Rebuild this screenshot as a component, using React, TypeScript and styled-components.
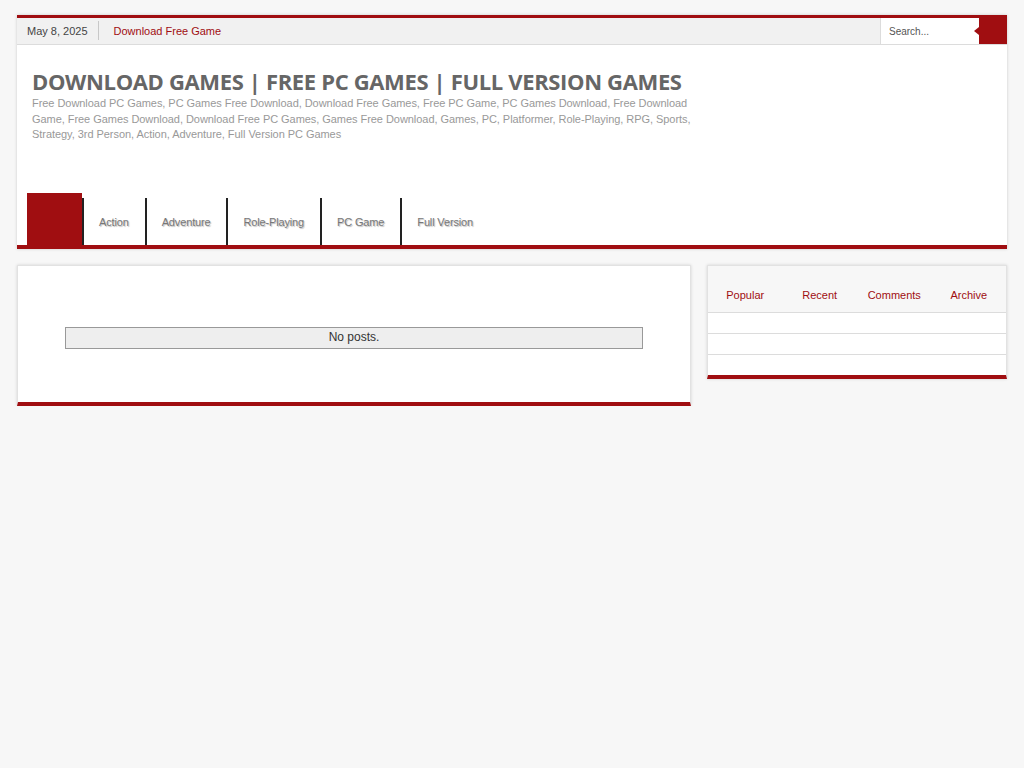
import styled, { createGlobalStyle } from 'styled-components';

const RED = '#a00e11';

const GlobalStyle = createGlobalStyle`
  html, body {
    margin: 0;
    padding: 0;
    background: #f7f7f7;
    font-family: "Liberation Sans", Arial, sans-serif;
  }
`;

const Wrapper = styled.div`
  width: 990px;
  margin: 15px auto 0;
`;

const Header = styled.header`
  background: #fff;
  border-top: 3px solid ${RED};
  border-bottom: 4px solid ${RED};
  box-shadow: 0 0 3px rgba(0, 0, 0, 0.18);
`;

const TopBar = styled.div`
  display: flex;
  align-items: stretch;
  height: 26px;
  background: #f1f1f1;
  border-bottom: 1px solid #dcdcdc;
`;

const DateText = styled.div`
  display: flex;
  align-items: center;
  padding: 0 10px;
  font-size: 11px;
  color: #444;
  border-right: 1px solid #c8c8c8;
  margin: 3px 0 4px;
`;

const TopLink = styled.a`
  display: flex;
  align-items: center;
  padding: 0 15px;
  font-size: 11px;
  color: ${RED};
  text-decoration: none;
`;

const SearchBox = styled.form`
  margin-left: auto;
  display: flex;
  height: 26px;
`;

const SearchInput = styled.input`
  width: 99px;
  box-sizing: border-box;
  border: none;
  border-left: 1px solid #dcdcdc;
  background: #fff;
  padding: 0 8px;
  font-family: "Liberation Sans", Arial, sans-serif;
  font-size: 10px;
  color: #555;
  outline: none;
  &::placeholder {
    color: #555;
  }
`;

const SearchButton = styled.button`
  position: relative;
  width: 28px;
  border: none;
  background: ${RED};
  padding: 0;
  &::before {
    content: '';
    position: absolute;
    left: -5px;
    top: 9px;
    border-top: 4px solid transparent;
    border-bottom: 4px solid transparent;
    border-right: 5px solid ${RED};
  }
`;

const Branding = styled.div`
  padding: 22px 15px 0;
  height: 148px;
  box-sizing: border-box;
`;

const SiteTitle = styled.h1`
  margin: 0;
  font-family: "Open Sans", "DejaVu Sans", sans-serif;
  font-weight: 700;
  font-size: 22px;
  line-height: 29px;
  color: #666;
  text-transform: uppercase;
  letter-spacing: -0.35px;
`;

const Tagline = styled.p`
  margin: 0;
  max-width: 665px;
  font-size: 11px;
  line-height: 15.5px;
  color: #999;
  letter-spacing: -0.05px;
`;

const Nav = styled.nav`
  display: flex;
  align-items: flex-end;
  height: 52px;
  padding-left: 10px;
`;

const HomeTab = styled.a`
  display: block;
  width: 55px;
  height: 52px;
  background: ${RED};
`;

const NavItem = styled.a`
  display: flex;
  align-items: center;
  height: 47px;
  padding: 0 16px 0 15px;
  border-left: 2px solid #222;
  font-size: 11px;
  color: #777;
  text-shadow: 1px 1px 1px #bbb;
  text-decoration: none;
  letter-spacing: -0.15px;
`;

const Content = styled.div`
  display: flex;
  align-items: flex-start;
  gap: 16px;
  margin-top: 16px;
`;

const MainCard = styled.main`
  width: 674px;
  box-sizing: border-box;
  background: #fff;
  border: 1px solid #e2e2e2;
  border-bottom: 4px solid ${RED};
  box-shadow: 0 0 3px rgba(0, 0, 0, 0.15);
  padding: 61px 47px 53px;
`;

const NoPosts = styled.div`
  height: 22px;
  box-sizing: border-box;
  background: #eee;
  border: 1px solid #999;
  text-align: center;
  font-size: 12px;
  line-height: 19px;
  color: #333;
`;

const Sidebar = styled.aside`
  width: 300px;
  box-sizing: border-box;
  background: #fff;
  border: 1px solid #e2e2e2;
  border-bottom: 4px solid ${RED};
  box-shadow: 0 0 3px rgba(0, 0, 0, 0.15);
`;

const Tabs = styled.div`
  display: grid;
  grid-template-columns: repeat(4, 1fr);
  height: 46px;
  background: #f7f7f7;
`;

const Tab = styled.a`
  display: flex;
  align-items: center;
  justify-content: center;
  padding-top: 11px;
  font-size: 11px;
  color: ${RED};
  text-decoration: none;
`;

const TabRow = styled.div`
  height: 20px;
  border-top: 1px solid #dcdcdc;
`;

const navItems = ['Action', 'Adventure', 'Role-Playing', 'PC Game', 'Full Version'];
const tabs = ['Popular', 'Recent', 'Comments', 'Archive'];

export default function App() {
  return (
    <>
      <GlobalStyle />
      <Wrapper>
        <Header>
          <TopBar>
            <DateText>May 8, 2025</DateText>
            <TopLink href="#">Download Free Game</TopLink>
            <SearchBox onSubmit={e => e.preventDefault()}>
              <SearchInput placeholder="Search..." />
              <SearchButton type="submit" aria-label="Search" />
            </SearchBox>
          </TopBar>
          <Branding>
            <SiteTitle>Download Games | Free PC Games | Full Version Games</SiteTitle>
            <Tagline>
              Free Download PC Games, PC Games Free Download, Download Free Games, Free PC Game, PC Games Download, Free Download Game, Free Games Download, Download Free PC Games, Games Free Download, Games, PC, Platformer, Role-Playing, RPG, Sports, Strategy, 3rd Person, Action, Adventure, Full Version PC Games
            </Tagline>
          </Branding>
          <Nav>
            <HomeTab href="#" />
            {navItems.map(item => (
              <NavItem key={item} href="#">{item}</NavItem>
            ))}
          </Nav>
        </Header>

        <Content>
          <MainCard>
            <NoPosts>No posts.</NoPosts>
          </MainCard>
          <Sidebar>
            <Tabs>
              {tabs.map(t => (
                <Tab key={t} href="#">{t}</Tab>
              ))}
            </Tabs>
            <TabRow />
            <TabRow />
            <TabRow />
          </Sidebar>
        </Content>
      </Wrapper>
    </>
  );
}
